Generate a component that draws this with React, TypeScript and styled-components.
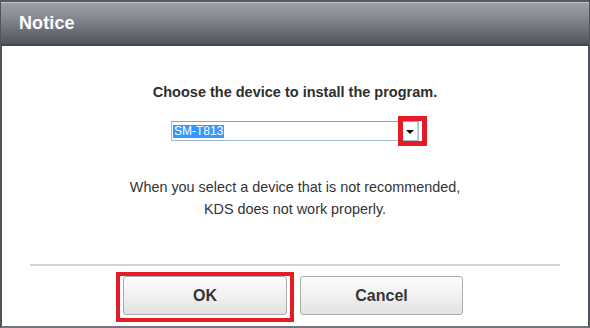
import React from "react";
import styled, { createGlobalStyle } from "styled-components";

const Global = createGlobalStyle`
  html, body { margin: 0; padding: 0; background: #ffffff; }
  body { font-family: "Liberation Sans", Arial, sans-serif; }
  * { box-sizing: border-box; }
`;

const Window = styled.div`
  width: 590px;
  height: 328px;
  display: flex;
  flex-direction: column;
  background: #ffffff;
`;

const TitleBar = styled.div`
  height: 46px;
  flex: none;
  display: flex;
  align-items: center;
  padding-left: 18px;
  border-top: 2px solid #555a62;
  border-left: 1px solid #50555d;
  border-right: 1px solid #50555d;
  border-bottom: 2px solid #454a52;
  background: linear-gradient(#9ca0a7 0%, #868b93 35%, #646972 75%, #50555e 100%);
  box-shadow: inset 0 1px 0 #c2c5ca;
`;

const Title = styled.h1`
  margin: 0;
  padding-top: 1px;
  font-size: 18px;
  font-weight: bold;
  color: #ffffff;
  letter-spacing: 0.1px;
`;

const Body = styled.div`
  flex: 1;
  display: flex;
  flex-direction: column;
  align-items: center;
  padding-top: 38px;
  border-left: 2px solid #50555d;
  border-right: 2px solid #50555d;
  border-bottom: 2px solid #72767d;
`;

const Heading = styled.p`
  margin: 0;
  font-size: 14.5px;
  line-height: 17px;
  font-weight: bold;
  color: #2e2e2e;
`;

const SelectBox = styled.div`
  position: relative;
  margin-top: 20px;
  width: 248px;
  height: 20px;
  display: flex;
  align-items: center;
  border: 1px solid #a6bad0;
  border-top-color: #8ba4be;
  background: #ffffff;
  padding-left: 1px;
`;

const SelectedValue = styled.span`
  flex: 1;
  display: flex;
  align-items: center;
`;

const Highlight = styled.span`
  background: #3399ff;
  color: #ffffff;
  font-size: 12px;
  line-height: 13px;
  padding: 0 1px;
`;

const DropButton = styled.span`
  width: 16px;
  height: 18px;
  display: flex;
  align-items: center;
  justify-content: center;
  border-right: 1px solid #d4d4d4;
  background: #ffffff;
`;

const Arrow = styled.span`
  width: 0;
  height: 0;
  border-left: 4px solid transparent;
  border-right: 4px solid transparent;
  border-top: 4px solid #111111;
  margin-top: 1px;
`;

const Marker = styled.span`
  position: absolute;
  left: 226px;
  top: -6px;
  width: 29px;
  height: 30px;
  border: 5px solid #e31d26;
`;

const Message = styled.p`
  margin: 35px 0 0;
  font-size: 14.4px;
  line-height: 22px;
  text-align: center;
  color: #333333;
`;

const Separator = styled.hr`
  align-self: stretch;
  margin: 44px 28px 0;
  border: none;
  height: 2px;
  background: #d3d3d3;
`;

const ButtonRow = styled.div`
  align-self: stretch;
  display: flex;
  align-items: flex-start;
  gap: 6px;
  padding-left: 114px;
  margin-top: 6px;
`;

const Highlighted = styled.div`
  border: 4px solid #e31d26;
  padding: 0 3px 3px;
`;

const Button = styled.button`
  width: ${(p: { $w: number }) => p.$w}px;
  height: 39px;
  border: 1px solid #ababab;
  border-radius: 3px;
  background: linear-gradient(#fdfdfd 0%, #f1f1f1 50%, #e2e2e2 100%);
  box-shadow: inset 0 1px 0 #ffffff;
  font-family: "Liberation Sans", Arial, sans-serif;
  font-size: 16px;
  font-weight: bold;
  color: #353535;
  padding: 0;
  cursor: pointer;
`;

const CancelWrap = styled.div`
  padding-top: 4px;
`;

export default function App() {
  return (
    <Window>
      <Global />
      <TitleBar>
        <Title>Notice</Title>
      </TitleBar>
      <Body>
        <Heading>Choose the device to install the program.</Heading>
        <SelectBox>
          <SelectedValue>
            <Highlight>SM-T813</Highlight>
          </SelectedValue>
          <DropButton>
            <Arrow />
          </DropButton>
          <Marker />
        </SelectBox>
        <Message>
          When you select a device that is not recommended,
          <br />
          KDS does not work properly.
        </Message>
        <Separator />
        <ButtonRow>
          <Highlighted>
            <Button $w={164}>OK</Button>
          </Highlighted>
          <CancelWrap>
            <Button $w={163}>Cancel</Button>
          </CancelWrap>
        </ButtonRow>
      </Body>
    </Window>
  );
}
